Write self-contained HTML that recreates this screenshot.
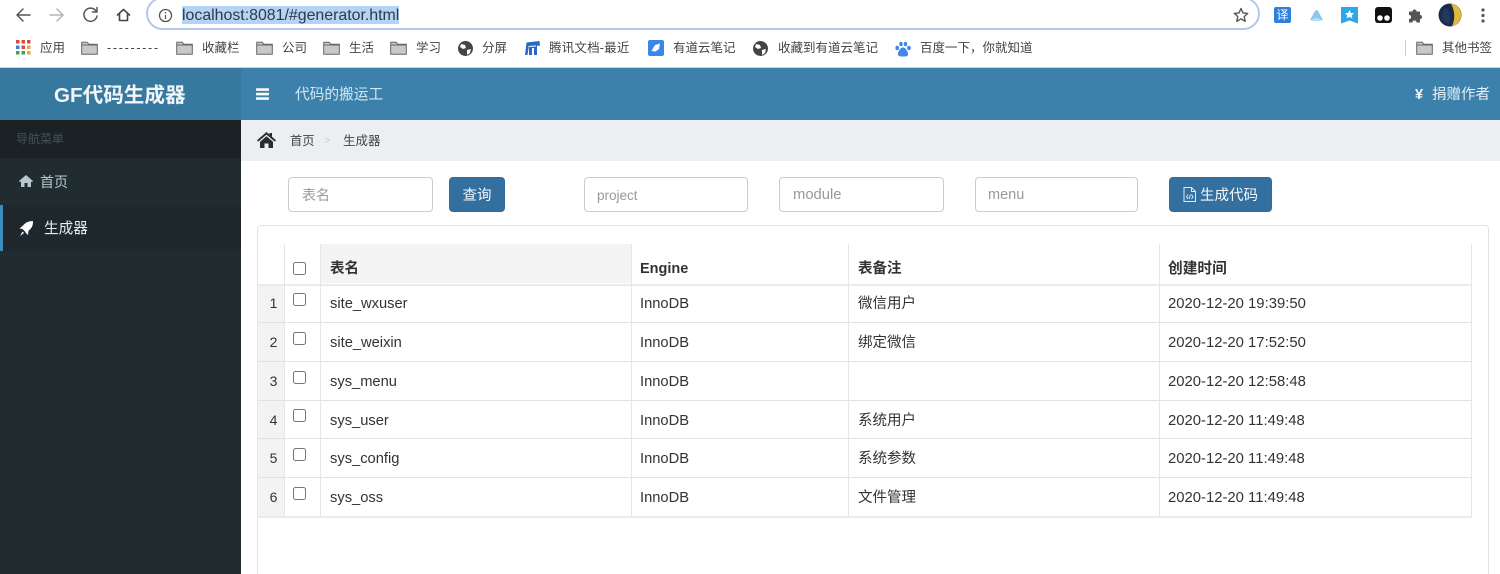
<!DOCTYPE html>
<html lang="zh"><head><meta charset="utf-8"><title>GF代码生成器</title>
<style>
*{box-sizing:border-box}
html,body{margin:0;padding:0;width:1500px;height:574px;overflow:hidden;background:#fff;font-family:"Liberation Sans","Noto Sans CJK SC",sans-serif;color:#333}
#wrap{position:relative;width:1500px;height:574px;overflow:hidden}
.a{position:absolute}
.t{position:absolute;white-space:nowrap;line-height:20px;height:20px}
.bm{font-size:12.5px;color:#444;top:38px}
svg{position:absolute;overflow:visible}
.inp{position:absolute;top:177px;height:35px;border:1px solid #ccc;border-radius:4px;background:#fff;font-size:14px;color:#999;line-height:35px;padding-left:13px}
.btn{position:absolute;top:177px;height:35px;background:#34709f;border:1px solid #2e6da4;border-radius:4px;color:#f4f7fa;font-size:14.5px;line-height:37px}
.h{position:absolute;height:1px;background:#e2e2e2;left:257px;width:1215px}
.v{position:absolute;width:1px;background:#e6e6e6;top:244px;height:272px}
.c{position:absolute;font-size:14.7px;line-height:20px;height:20px;margin-top:1px;color:#333;white-space:nowrap}
.th{font-weight:bold;top:258px;font-size:14.5px}
.d{font-size:14.85px}
.cb{position:absolute;left:293px;width:13px;height:13px;border:1px solid #767676;border-radius:2.5px;background:#fff}
.num{position:absolute;left:258px;width:26px;text-align:center;padding-left:5px;font-size:14px;line-height:20px;color:#333}
</style></head><body><div id="wrap">

<!-- Browser toolbar -->
<svg style="left:0;top:0" width="150" height="30" fill="none" stroke-linecap="round" stroke-linejoin="round">
<path d="M30 15H17M23 9l-6 6 6 6" stroke="#555" stroke-width="1.5"/>
<path d="M50 15h13M57 9l6 6-6 6" stroke="#b5b5b5" stroke-width="1.5"/>
<path d="M96 11a6.600 6.600 0 1 0 1 5M97 7.500V12h-4.500" stroke="#555" stroke-width="1.500"/>
<path d="M117.500 15l6-5.500 6 5.500M119.500 14v6.500h8V14" stroke="#444" stroke-width="1.600"/>
</svg>
<div class="a" style="left:146px;top:-3px;width:1114px;height:33px;border:2px solid #b4c8ea;border-radius:17px;background:#fff"></div>
<svg style="left:158px;top:8px" width="15" height="15" fill="none" stroke="#555" stroke-width="1.300"><circle cx="7.500" cy="7.500" r="6"/><path d="M7.500 7v4M7.500 4v1.500"/></svg>
<div class="a" style="left:182px;top:6px;width:217px;height:18px;background:#b5d3f5"></div>
<div class="t" style="left:182px;top:6px;font-size:15.9px;color:#2f3a45">localhost:8081/#generator.html</div>
<svg style="left:1233px;top:7px" width="16" height="16" fill="none" stroke="#555" stroke-width="1.400" stroke-linejoin="round"><path d="M8 1.500l2 4.400 4.700.5-3.500 3.200 1 4.700L8 11.900l-4.200 2.400 1-4.700L1.300 6.400 6 5.900z"/></svg>

<!-- Extension icons -->
<div class="a" style="left:1274px;top:7px;width:17px;height:16px;background:#2f80de;border-radius:2px;color:#fff;font-size:12px;line-height:16px;text-align:center">译</div>
<svg style="left:1309px;top:8px" width="15" height="14"><path d="M1 12L6 3q1.500-2 3 0l5 9q-6 1.500-13 0z" fill="#8ec8e8"/><path d="M3 12q4-4 9 0z" fill="#b9dff2"/></svg>
<svg style="left:1341px;top:7px" width="17" height="17"><path d="M0 0h17v16.500l-8.500-3-8.500 3z" fill="#2ea7e8"/><path d="M8.500 3l1.400 3 3.200.3-2.400 2.100.7 3.100-2.900-1.600-2.900 1.600.7-3.100L3.900 6.300 7.100 6z" fill="#fff"/></svg>
<svg style="left:1375px;top:7px" width="17" height="16"><rect width="17" height="16" rx="3" fill="#111"/><circle cx="5" cy="11" r="2.800" fill="#fff"/><circle cx="12" cy="11" r="2.800" fill="#fff"/></svg>
<svg style="left:1408px;top:7px" width="16" height="16"><path d="M1 4.500h3.500a2 2 0 0 1 4 0H12v3.500a2 2 0 0 1 0 4v3.500H8.500a2 2 0 0 0-4 0H1v-3.500a2 2 0 0 0 0-4z" fill="#555"/></svg>
<svg style="left:1438px;top:3px" width="24" height="24"><circle cx="12" cy="12" r="11.500" fill="#1c2b4a"/><path d="M13 .6A11.500 11.500 0 0 1 14 23.300Q19 12 13 .6z" fill="#e2b93c"/><path d="M9 5q5 6 2 16-8-3-7-9t5-7z" fill="#24375c"/></svg>
<svg style="left:1481px;top:8px" width="4" height="15" fill="#555"><circle cx="2" cy="2" r="1.600"/><circle cx="2" cy="7.500" r="1.600"/><circle cx="2" cy="13" r="1.600"/></svg>

<!-- Bookmarks -->
<svg style="left:16px;top:40px" width="15" height="15">
<g fill="#d9483b"><rect width="3.500" height="3.500" x="0"/><rect width="3.500" height="3.500" x="5.500"/><rect width="3.500" height="3.500" x="11"/></g>
<g><rect width="3.500" height="3.500" x="0" y="5.500" fill="#3f7fe0"/><rect width="3.500" height="3.500" x="5.500" y="5.500" fill="#d9483b"/><rect width="3.500" height="3.500" x="11" y="5.500" fill="#e8a93b"/></g>
<g><rect width="3.500" height="3.500" x="0" y="11" fill="#3fa35a"/><rect width="3.500" height="3.500" x="5.500" y="11" fill="#3fa35a"/><rect width="3.500" height="3.500" x="11" y="11" fill="#e8a93b"/></g></svg>
<div class="t bm" style="left:40px">应用</div>

<svg style="left:81px;top:41px" width="17" height="14"><path d="M.7 13.300V1.200h5.500l1.500 2h8.600v10.100z" fill="#c9c9c9" stroke="#666" stroke-width="1"/><path d="M.7 4h16" stroke="#666"/></svg>
<div class="t bm" style="left:107px;letter-spacing:1.7px">---------</div>
<svg style="left:176px;top:41px" width="17" height="14"><path d="M.7 13.300V1.200h5.500l1.500 2h8.600v10.100z" fill="#c9c9c9" stroke="#666" stroke-width="1"/><path d="M.7 4h16" stroke="#666"/></svg>
<div class="t bm" style="left:202px">收藏栏</div>
<svg style="left:256px;top:41px" width="17" height="14"><path d="M.7 13.300V1.200h5.500l1.500 2h8.600v10.100z" fill="#c9c9c9" stroke="#666" stroke-width="1"/><path d="M.7 4h16" stroke="#666"/></svg>
<div class="t bm" style="left:282px">公司</div>
<svg style="left:323px;top:41px" width="17" height="14"><path d="M.7 13.300V1.200h5.500l1.500 2h8.600v10.100z" fill="#c9c9c9" stroke="#666" stroke-width="1"/><path d="M.7 4h16" stroke="#666"/></svg>
<div class="t bm" style="left:349px">生活</div>
<svg style="left:390px;top:41px" width="17" height="14"><path d="M.7 13.300V1.200h5.500l1.500 2h8.600v10.100z" fill="#c9c9c9" stroke="#666" stroke-width="1"/><path d="M.7 4h16" stroke="#666"/></svg>
<div class="t bm" style="left:416px">学习</div>

<svg style="left:458px;top:41px" width="15" height="15"><circle cx="7.500" cy="7.500" r="7.500" fill="#444"/><path d="M3 3l4 1 1 3-3 1-3-2zM9 9l4-1-1 4-3 2z" fill="#fff"/></svg>
<div class="t bm" style="left:482px">分屏</div>
<svg style="left:525px;top:41px" width="15" height="15"><path d="M1.500 1.500L14.500 0 15 5l-3-.5V14H9V7H7v7H4V4.500L2.500 14H0z" fill="#2b68c9"/><path d="M3.500 5.500L11 5" stroke="#fff" stroke-width="1"/></svg>
<div class="t bm" style="left:549px;letter-spacing:.2px">腾讯文档-最近</div>
<svg style="left:648px;top:40px" width="16" height="16"><rect width="16" height="16" rx="2" fill="#3a86ef"/><path d="M3.500 11L7 5l5-1.500-1 5.500-3.500 2.500z" fill="#fff"/></svg>
<div class="t bm" style="left:673px">有道云笔记</div>
<svg style="left:753px;top:41px" width="15" height="15"><circle cx="7.500" cy="7.500" r="7.500" fill="#444"/><path d="M3 3l4 1 1 3-3 1-3-2zM9 9l4-1-1 4-3 2z" fill="#fff"/></svg>
<div class="t bm" style="left:778px">收藏到有道云笔记</div>
<svg style="left:895px;top:41px" width="16" height="16" fill="#3f86e8"><ellipse cx="2.200" cy="7" rx="1.800" ry="2.200"/><ellipse cx="6" cy="3" rx="1.700" ry="2.300"/><ellipse cx="10.500" cy="3" rx="1.700" ry="2.300"/><ellipse cx="14" cy="7" rx="1.800" ry="2.200"/><path d="M8 6.500c2.500 0 5 4 5 6.500s-2 2.500-5 2.500-5 0-5-2.500 2.500-6.500 5-6.500z"/></svg>
<div class="t bm" style="left:920px">百度一下，你就知道</div>
<div class="a" style="left:1405px;top:40px;width:1px;height:16px;background:#ccc"></div>
<svg style="left:1416px;top:41px" width="17" height="14"><path d="M.7 13.300V1.200h5.500l1.500 2h8.600v10.100z" fill="#c9c9c9" stroke="#666" stroke-width="1"/><path d="M.7 4h16" stroke="#666"/></svg>
<div class="t bm" style="left:1442px">其他书签</div>

<!-- App header -->
<div class="a" style="left:0;top:67px;width:1500px;height:1px;background:#c6d6e6"></div>
<div class="a" style="left:0;top:68px;width:241px;height:52px;background:#37789f"></div>
<div class="a" style="left:241px;top:68px;width:1259px;height:52px;background:#3c81ac"></div>
<div class="t" style="left:54px;top:84px;font-size:20.6px;font-weight:bold;color:#f2f6f9;line-height:24px;height:24px">GF代码生成器</div>
<svg style="left:256px;top:88px" width="14" height="13" fill="#f6f9fb"><rect width="13" height="2.600" y="0.300" rx=".6"/><rect width="13" height="2.600" y="4.800" rx=".6"/><rect width="13" height="2.600" y="9.300" rx=".6"/></svg>
<div class="t" style="left:295px;top:85px;font-size:14.7px;color:#d6e6f0">代码的搬运工</div>
<div class="t" style="left:1415px;top:85px;font-size:14.5px;color:#f2f6f9;font-weight:bold">¥</div>
<div class="t" style="left:1432px;top:85px;font-size:14.5px;color:#e6eff5">捐赠作者</div>

<!-- Sidebar -->
<div class="a" style="left:0;top:120px;width:241px;height:454px;background:#212c31"></div>
<div class="a" style="left:0;top:120px;width:241px;height:38px;background:#1a2226"></div>
<div class="t" style="left:16px;top:129px;font-size:12px;color:#44525a">导航菜单</div>
<svg style="left:19px;top:175px" width="14" height="12"><path d="M7 0l7 6-1 1.200-1-.8V12H8.500V8h-3v4H2V6.400l-1 .8L0 6z" fill="#b8c7ce"/></svg>
<div class="t" style="left:40px;top:172px;font-size:14px;color:#b8c7ce">首页</div>
<div class="a" style="left:0;top:205px;width:241px;height:46px;background:#1e282c"></div>
<div class="a" style="left:0;top:205px;width:3px;height:46px;background:#3c8dbc"></div>
<svg style="left:19px;top:221px" width="14" height="15"><path d="M14 0c.3 4.500-1.500 7.500-4.500 9.800L9 14l-2.500-2.500L6 10.500 3.500 8 .5 7.500 4 4.500C6.500 1.500 10 0 14 0z" fill="#fff"/><path d="M3.500 10.500l1.500 1.500L1 15z" fill="#fff"/></svg>
<div class="t" style="left:44px;top:219px;font-size:14.6px;color:#e6edf0">生成器</div>

<!-- Breadcrumb -->
<div class="a" style="left:241px;top:120px;width:1259px;height:41px;background:#ebeff2"></div>
<svg style="left:257px;top:132px" width="19" height="16"><path d="M9.500 0l3 2.600V1h2.500v3.800L19 8.300l-1.200 1.300-8.300-7-8.300 7L0 8.300z" fill="#2c2c2c"/><path d="M3 9.800l6.500-5.600L16 9.800V16h-4.500v-4.500h-4V16H3z" fill="#2c2c2c"/></svg>
<div class="t" style="left:290px;top:131px;font-size:12.3px;color:#444">首页</div>
<div class="t" style="left:324px;top:131px;font-size:11px;color:#ccc">&gt;</div>
<div class="t" style="left:343px;top:131px;font-size:12.5px;color:#444">生成器</div>

<!-- Toolbar -->
<div class="inp" style="left:288px;width:145px">表名</div>
<div class="btn" style="left:449px;width:56px;text-align:center">查询</div>
<div class="inp" style="left:584px;width:164px;padding-left:12px;font-size:13.5px">project</div>
<div class="inp" style="left:779px;width:165px;font-size:14.8px">module</div>
<div class="inp" style="left:975px;width:163px;padding-left:12px;font-size:14.5px">menu</div>
<div class="btn" style="left:1169px;width:103px;padding-left:30px">生成代码</div>
<svg style="left:1183px;top:187px" width="13" height="15" fill="none" stroke="#dfeaf3" stroke-width="1"><path d="M1 .5h7.500l4 4V14.500H1zM8.500.5v4h4"/><path d="M5 7.500L3.500 10 5 12M8.500 7.500L10 10l-1.500 2M7.500 7.500L6 12"/></svg>

<!-- Panel -->
<div class="a" style="left:257px;top:225px;width:1232px;height:349px;border:1px solid #e2e2e2;border-bottom:none;border-radius:4px 4px 0 0;background:#fff"></div>

<!-- Table backgrounds -->
<div class="a" style="left:321px;top:244px;width:310px;height:39px;background:#f4f4f4"></div>
<div class="a" style="left:258px;top:284px;width:26px;height:232px;background:#f3f3f3"></div>

<!-- Table lines -->
<div class="h" style="top:284px;height:2px;background:#ebebeb"></div>
<div class="h" style="top:322px"></div>
<div class="h" style="top:361px"></div>
<div class="h" style="top:400px"></div>
<div class="h" style="top:438px"></div>
<div class="h" style="top:477px"></div>
<div class="h" style="top:516px;height:2px;background:#ebebeb"></div>
<div class="v" style="left:257px;top:284px;height:232px"></div>
<div class="v" style="left:284px"></div>
<div class="v" style="left:320px"></div>
<div class="v" style="left:631px"></div>
<div class="v" style="left:848px"></div>
<div class="v" style="left:1159px"></div>
<div class="v" style="left:1471px"></div>

<!-- Header row -->
<div class="cb" style="top:262px"></div>
<div class="c th" style="left:330px">表名</div>
<div class="c th" style="left:640px">Engine</div>
<div class="c th" style="left:858px">表备注</div>
<div class="c th" style="left:1168px;font-size:14.7px">创建时间</div>

<!-- Row 1 -->
<div class="num" style="top:293px">1</div><div class="cb" style="top:293px"></div>
<div class="c" style="left:330px;top:293px">site_wxuser</div><div class="c" style="left:640px;top:293px">InnoDB</div><div class="c" style="left:858px;top:293px;font-size:14.5px">微信用户</div><div class="c d" style="left:1168px;top:293px">2020-12-20 19:39:50</div>
<!-- Row 2 -->
<div class="num" style="top:332px">2</div><div class="cb" style="top:332px"></div>
<div class="c" style="left:330px;top:332px">site_weixin</div><div class="c" style="left:640px;top:332px">InnoDB</div><div class="c" style="left:858px;top:332px;font-size:14.5px">绑定微信</div><div class="c d" style="left:1168px;top:332px">2020-12-20 17:52:50</div>
<!-- Row 3 -->
<div class="num" style="top:371px">3</div><div class="cb" style="top:371px"></div>
<div class="c" style="left:330px;top:371px">sys_menu</div><div class="c" style="left:640px;top:371px">InnoDB</div><div class="c d" style="left:1168px;top:371px">2020-12-20 12:58:48</div>
<!-- Row 4 -->
<div class="num" style="top:410px">4</div><div class="cb" style="top:409px"></div>
<div class="c" style="left:330px;top:410px">sys_user</div><div class="c" style="left:640px;top:410px">InnoDB</div><div class="c" style="left:858px;top:410px;font-size:14.5px">系统用户</div><div class="c d" style="left:1168px;top:410px">2020-12-20 11:49:48</div>
<!-- Row 5 -->
<div class="num" style="top:448px">5</div><div class="cb" style="top:448px"></div>
<div class="c" style="left:330px;top:448px">sys_config</div><div class="c" style="left:640px;top:448px">InnoDB</div><div class="c" style="left:858px;top:448px;font-size:14.5px">系统参数</div><div class="c d" style="left:1168px;top:448px">2020-12-20 11:49:48</div>
<!-- Row 6 -->
<div class="num" style="top:487px">6</div><div class="cb" style="top:487px"></div>
<div class="c" style="left:330px;top:487px">sys_oss</div><div class="c" style="left:640px;top:487px">InnoDB</div><div class="c" style="left:858px;top:487px;font-size:14.5px">文件管理</div><div class="c d" style="left:1168px;top:487px">2020-12-20 11:49:48</div>

</div></body></html>
